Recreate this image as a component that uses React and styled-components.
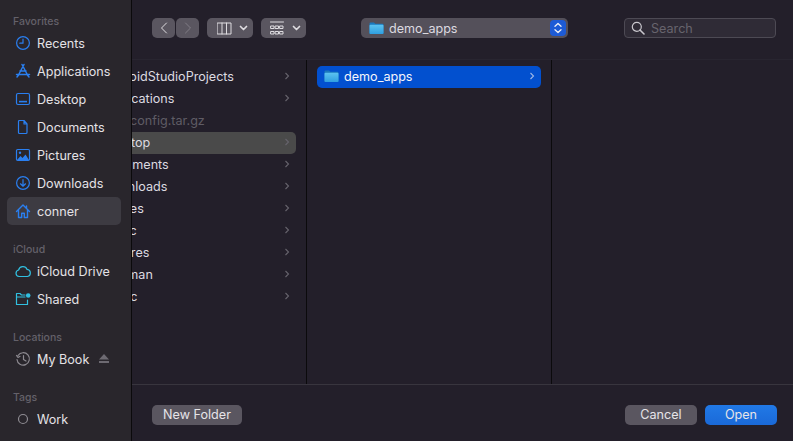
import React from 'react'
import styled, { createGlobalStyle } from 'styled-components'

const GlobalStyle = createGlobalStyle`
    html, body {
        margin: 0;
        padding: 0;
        background: #231f2a;
    }
    * {
        box-sizing: border-box;
    }
`

const Dialog = styled.div`
    display: flex;
    width: 793px;
    height: 441px;
    overflow: hidden;
    background: #231f2a;
    font-family: Inter, "Liberation Sans", sans-serif;
    font-size: 12.6px;
    color: #e4e2e6;
`

const Sidebar = styled.aside`
    flex: none;
    width: 132px;
    padding: 15px 10px 0 7px;
    background: #29262c;
    border-right: 1px solid #0b0a0c;
`

const SideHeading = styled.div`
    height: 14px;
    margin: ${p => p.$top || 0}px 0 0 6px;
    font-size: 10.5px;
    font-weight: 500;
    line-height: 14px;
    color: #64616a;
`

const SideItem = styled.div`
    display: flex;
    align-items: center;
    height: 28px;
    padding-left: 7px;
    border-radius: 5px;
    background: ${p => (p.$active ? '#3d3b42' : 'transparent')};
    white-space: nowrap;
`

const SideIcon = styled.svg`
    flex: none;
    width: 18px;
    height: 18px;
    margin-right: 5px;
    fill: none;
    stroke: ${p => p.$color || '#2a7ff0'};
    stroke-width: 1.2;
    stroke-linecap: round;
    stroke-linejoin: round;
`

const Eject = styled.svg`
    width: 12px;
    height: 10px;
    margin-left: 9px;
    fill: #6d6a72;
`

const Main = styled.main`
    flex: 1;
    display: flex;
    flex-direction: column;
    min-width: 0;
`

const Toolbar = styled.header`
    flex: none;
    display: flex;
    align-items: flex-start;
    height: 60px;
    padding: 18px 17px 0 20px;
    border-bottom: 1px solid #282530;
`

const ToolButton = styled.div`
    display: flex;
    align-items: center;
    justify-content: ${p => (p.$center ? 'center' : 'flex-start')};
    flex: none;
    width: ${p => p.$w}px;
    height: 20px;
    margin-left: ${p => p.$left || 0}px;
    padding-left: ${p => p.$pad || 0}px;
    border-radius: 5px;
    background: #5a5660;
`

const ToolIcon = styled.svg`
    display: block;
    flex: none;
    margin-left: ${p => p.$left || 0}px;
    fill: none;
    stroke: ${p => p.$color || '#dedce0'};
    stroke-width: ${p => p.$sw || 1};
    stroke-linecap: round;
    stroke-linejoin: round;
`

const PathPopup = styled.div`
    display: flex;
    align-items: center;
    flex: none;
    width: 207px;
    height: 20px;
    margin-left: 55px;
    padding: 0 2px 0 8px;
    border-radius: 5px;
    background: #54505a;
    color: #dcdae0;
`

const PathName = styled.span`
    flex: 1;
    margin-left: 5px;
`

const Stepper = styled.div`
    display: flex;
    align-items: center;
    justify-content: center;
    width: 16px;
    height: 16px;
    border-radius: 4px;
    background: #1d5bd6;
`

const SearchBox = styled.div`
    display: flex;
    align-items: center;
    flex: none;
    width: 152px;
    height: 20px;
    margin-left: auto;
    padding-left: 6px;
    border: 1px solid #4d4a54;
    border-radius: 4px;
    background: #2f2b36;
    color: #67646d;
`

const SearchText = styled.span`
    margin-left: 6px;
`

const Browser = styled.section`
    flex: 1;
    display: flex;
    min-height: 0;
`

const Column = styled.div`
    flex: none;
    width: ${p => p.$w}px;
    padding-top: 6px;
    overflow: hidden;
    border-right: 1px solid #0b0a0c;
`

const RowList = styled.div`
    display: flex;
    flex-direction: column;
    margin: 0 10px 0 ${p => p.$shift || 0}px;
`

const Row = styled.div`
    display: flex;
    align-items: center;
    height: 22px;
    padding: 0 6px 2px ${p => p.$pad || 0}px;
    border-radius: 5px;
    background: ${p => (p.$bg || 'transparent')};
    color: ${p => p.$color || '#dcdae0'};
    white-space: nowrap;
`

const RowName = styled.span`
    flex: 1;
    margin-left: ${p => p.$left || 0}px;
`

const Chevron = styled.svg`
    flex: none;
    width: 6px;
    height: 8px;
    fill: none;
    stroke: ${p => p.$color || '#66636c'};
    stroke-width: 1.1;
`

const Footer = styled.footer`
    flex: none;
    display: flex;
    align-items: flex-start;
    height: 57px;
    padding: 20px 16px 0 20px;
    border-top: 1px solid #38353e;
`

const Button = styled.button`
    flex: none;
    width: ${p => p.$w}px;
    height: 20px;
    margin-left: ${p => p.$left || 0}px;
    padding: 0;
    border: 0;
    border-radius: 5px;
    background: ${p => (p.$primary ? 'linear-gradient(#2179e6, #1a69d8)' : '#5a5660')};
    color: #e6e4e8;
    font: inherit;
    line-height: 20px;
`

const favorites = [
    { name: 'Recents', icon: <><circle cx="9" cy="9" r="6.4" /><path d="M9 5v4.2H5.8" /></> },
    { name: 'Applications', icon: <path d="M10 2.5 5 12M8 2.5l5 9.500M2.500 12.500h13M3 15l2-2.500M15 15l-2-2.500M6 9h6" strokeWidth="1.5" /> },
    { name: 'Desktop', icon: <><rect x="2.500" y="3.500" width="13" height="11" rx="1.500" /><rect x="5" y="10.800" width="8" height="1.600" fill="#2a7ff0" stroke="none" /></> },
    { name: 'Documents', icon: <path d="M5.500 2.500h4.500L13 6v8.500a1 1 0 0 1-1 1H5.500a1 1 0 0 1-1-1v-11a1 1 0 0 1 1-1zM10 2.500V6h3" /> },
    { name: 'Pictures', icon: <><rect x="2.500" y="3.500" width="13" height="11" rx="1.200" /><circle cx="6" cy="6.800" r="1.200" fill="#2a7ff0" stroke="none" /><path d="M3 14l3.500-4 2 2 3-3.500 3.500 5.500z" fill="#2a7ff0" stroke="none" /></> },
    { name: 'Downloads', icon: <><circle cx="9" cy="9" r="6.400" /><path d="M9 5.500v6.500M6.500 9.800 9 12.200l2.500-2.400" /></> },
    { name: 'conner', active: true, icon: <path d="M2.500 9.500 9 3l6.500 6.500M4.500 8v7.500h3.200v-4.300h2.600v4.300h3.200V8M12.500 4v2" strokeWidth="1.400" /> },
]

const columnOne = [
    { name: 'AndroidStudioProjects' },
    { name: 'Applications' },
    { name: 'zshconfig.tar.gz', file: true },
    { name: 'Desktop', active: true },
    { name: 'Documents' },
    { name: 'Downloads' },
    { name: 'Movies' },
    { name: 'Music' },
    { name: 'Pictures' },
    { name: 'Postman' },
    { name: 'Public' },
]

const FolderIcon = () => (
    <svg width="15" height="14" viewBox="0 0 15 14">
        <defs>
            <linearGradient id="folderFront" x1="0" y1="0" x2="0" y2="1">
                <stop offset="0" stopColor="#5cc2f0" />
                <stop offset="1" stopColor="#2f9fe0" />
            </linearGradient>
        </defs>
        <path d="M.5 2.500a1 1 0 0 1 1-1h3.500l1.300 1.300h7.200a1 1 0 0 1 1 1v8.200a1 1 0 0 1-1 1h-12a1 1 0 0 1-1-1z" fill="#1a78bd" />
        <rect x=".5" y="3.800" width="14" height="9.200" rx="1" fill="url(#folderFront)" />
    </svg>
)

const RowChevron = ({ color }) => (
    <Chevron viewBox="0 0 6 8" $color={color}><path d="M1.500 1 4.500 4l-3 3" /></Chevron>
)

const App = () => {
    return <>
        <GlobalStyle />
        <Dialog>
            <Sidebar>
                <SideHeading>Favorites</SideHeading>
                {favorites.map(item => (
                    <SideItem key={item.name} $active={item.active}>
                        <SideIcon viewBox="0 0 18 18">{item.icon}</SideIcon>
                        {item.name}
                    </SideItem>
                ))}
                <SideHeading $top={18}>iCloud</SideHeading>
                <SideItem>
                    <SideIcon viewBox="0 0 18 18" $color="#31bfe0">
                        <path d="M5 14.500a3.300 3.300 0 0 1-.4-6.500 4.500 4.500 0 0 1 8.500-.6 3.600 3.600 0 0 1 .4 7.100z" />
                    </SideIcon>
                    iCloud Drive
                </SideItem>
                <SideItem>
                    <SideIcon viewBox="0 0 18 18" $color="#31bfe0">
                        <path d="M11 5H7.500L6 3.500H2.500v11h11V10M2.500 7H11" />
                        <circle cx="14.200" cy="5.500" r="2.300" fill="#31bfe0" stroke="none" />
                    </SideIcon>
                    Shared
                </SideItem>
                <SideHeading $top={18}>Locations</SideHeading>
                <SideItem>
                    <SideIcon viewBox="0 0 18 18" $color="#8e8b92">
                        <path d="M4 5.500A6.200 6.200 0 1 1 3 9.500M2.500 5.500 4 7.500l2-1.200M9.500 5.500v4l2.500 1.500" />
                    </SideIcon>
                    My Book
                    <Eject viewBox="0 0 12 10"><path d="M6 0l5 5.500H1zM1 7h10v2H1z" /></Eject>
                </SideItem>
                <SideHeading $top={18}>Tags</SideHeading>
                <SideItem>
                    <SideIcon viewBox="0 0 18 18" $color="#8e8b92"><circle cx="9" cy="9" r="4.500" /></SideIcon>
                    Work
                </SideItem>
            </Sidebar>
            <Main>
                <Toolbar>
                    <ToolButton $w={23} $center>
                        <ToolIcon width="8" height="12" viewBox="0 0 8 12"><path d="M6.500 1 1.500 6l5 5" /></ToolIcon>
                    </ToolButton>
                    <ToolButton $w={23} $left={1} $center>
                        <ToolIcon width="8" height="12" viewBox="0 0 8 12" $color="#807d85"><path d="M1.500 1l5 5-5 5" /></ToolIcon>
                    </ToolButton>
                    <ToolButton $w={46} $left={8} $pad={10}>
                        <ToolIcon width="15" height="13" viewBox="0 0 15 13"><path d="M.5 1h13.500v11H.5zM5 1v11M9.500 1v11" /></ToolIcon>
                        <ToolIcon width="9" height="6" viewBox="0 0 9 6" $left={7} $sw={1.7}><path d="M1.500 1.500 4.500 4.500l3-3" /></ToolIcon>
                    </ToolButton>
                    <ToolButton $w={45} $left={8} $pad={9}>
                        <ToolIcon width="14" height="15" viewBox="0 0 14 15"><path d="M.5 1h13M1 5h3v2.500H1zM5.500 5h3v2.500h-3zM10 5h3v2.500h-3zM1 10.500h3V13H1zM5.500 10.500h3V13h-3zM10 10.500h3V13h-3z" /></ToolIcon>
                        <ToolIcon width="9" height="6" viewBox="0 0 9 6" $left={8} $sw={1.7}><path d="M1.500 1.500 4.500 4.500l3-3" /></ToolIcon>
                    </ToolButton>
                    <PathPopup>
                        <FolderIcon />
                        <PathName>demo_apps</PathName>
                        <Stepper>
                            <ToolIcon width="8" height="12" viewBox="0 0 8 12" $color="#f0f2f8" $sw={1.3}><path d="M1 4.200 4 1.500l3 2.700M1 7.800l3 2.700 3-2.700" /></ToolIcon>
                        </Stepper>
                    </PathPopup>
                    <SearchBox>
                        <ToolIcon width="14" height="14" viewBox="0 0 14 14" $color="#c9c7cd" $sw={1.2}><circle cx="5.800" cy="5.800" r="4.500" /><path d="M9 9l4 4" strokeWidth="1.600" /></ToolIcon>
                        <SearchText>Search</SearchText>
                    </SearchBox>
                </Toolbar>
                <Browser>
                    <Column $w={175}>
                        <RowList $shift={-31}>
                            {columnOne.map(row => (
                                <Row key={row.name}
                                    $bg={row.active ? '#4a4a4a' : undefined}
                                    $color={row.file ? '#5f5c65' : undefined}>
                                    <RowName $left={row.file ? 8 : 0}>{row.name}</RowName>
                                    {!row.file && <RowChevron />}
                                </Row>
                            ))}
                        </RowList>
                    </Column>
                    <Column $w={245}>
                        <RowList $shift={10}>
                            <Row $pad={7} $bg="#0250cf" $color="#f4f6fb">
                                <FolderIcon />
                                <RowName $left={5}>demo_apps</RowName>
                                <RowChevron color="#9db7e6" />
                            </Row>
                        </RowList>
                    </Column>
                </Browser>
                <Footer>
                    <Button $w={90}>New Folder</Button>
                    <Button $w={72} $left={383}>Cancel</Button>
                    <Button $w={72} $left={8} $primary>Open</Button>
                </Footer>
            </Main>
        </Dialog>
    </>
}

export default App
